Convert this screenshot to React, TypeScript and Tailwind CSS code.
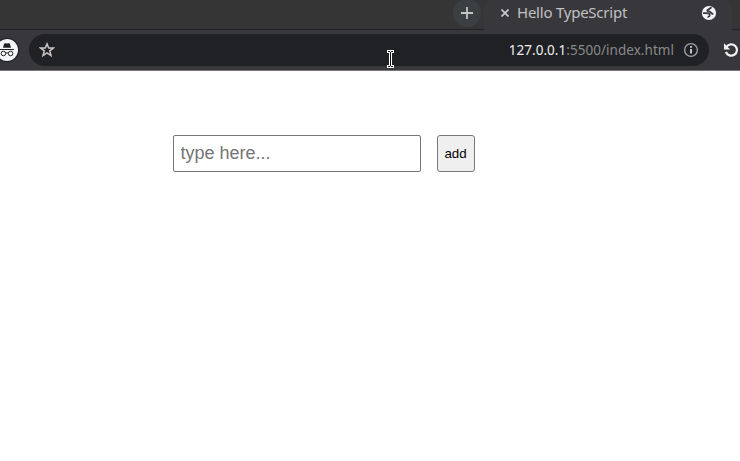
import React from 'react';

function Globe() {
  return (
    <svg width="16" height="16" viewBox="0 0 16 16" className="block">
      <circle cx="8" cy="8" r="7.1" fill="#f4f5f7" />
      <path d="M10.2 2.2C9.8 4.4 6.4 3.8 6.3 5.4C6.3 7 9.8 6 10.2 8.1C10.4 8.9 11.4 8.8 12.4 8.7" fill="none" stroke="#38373c" strokeWidth="1.9" />
      <path d="M2 8.2H5.4C7.8 8.2 9.2 9 8.7 10.6C8.3 11.7 7.2 11.2 6.8 12.6" fill="none" stroke="#38373c" strokeWidth="1.7" />
    </svg>
  );
}

function Incognito() {
  return (
    <svg width="26" height="26" viewBox="0 0 26 26" className="block shrink-0">
      <circle cx="13" cy="13" r="12.2" fill="#202125" />
      <circle cx="13" cy="13" r="11" fill="#f3f5f8" />
      <path d="M9 10.7L10.1 6.8Q10.4 6 11.2 6.2L13 6.6L14.8 6.2Q15.6 6 15.9 6.8L17 10.7Z" fill="#202125" />
      <path d="M6 12.5H20" stroke="#202125" strokeWidth="1" />
      <g fill="none" stroke="#202125" strokeWidth="1">
        <circle cx="9.4" cy="16.5" r="2.3" />
        <circle cx="16.6" cy="16.5" r="2.3" />
        <path d="M11.7 16.2Q13 15.4 14.3 16.2" />
      </g>
    </svg>
  );
}

function TabStrip() {
  return (
    <div className="flex h-[30px] bg-[#353535]">
      <div className="flex w-[484px] items-start justify-end border-b border-[#202124] pr-[3px]">
        <div className="-mt-px flex size-7 items-center justify-center rounded-full bg-[#3b3f42]">
          <svg width="12" height="12" viewBox="0 0 12 12">
            <path d="M6 0V12M0 6H12" stroke="#c3c3c3" strokeWidth="1.8" />
          </svg>
        </div>
      </div>
      <div className="flex w-[248px] items-start rounded-t-lg bg-[#38373c] pl-[17px]">
        <svg width="8" height="8" viewBox="0 0 8 8" className="mt-[9px]">
          <path d="M0.5 0.5L7.5 7.5M7.5 0.5L0.5 7.5" stroke="#c9c9cb" strokeWidth="1.7" />
        </svg>
        <span className="ml-2 mt-[2px] w-[184px] font-['Noto_Sans',sans-serif] text-[15px] leading-5 tracking-[-0.23px] text-[#c1c1c3]">Hello TypeScript</span>
        <div className="mt-[5px]"><Globe /></div>
      </div>
      <div className="flex-1 border-b border-[#202124]" />
    </div>
  );
}

function Toolbar() {
  return (
    <div className="flex h-[41px] items-start overflow-hidden border-b border-[#77747b] bg-[#38373c] pt-1">
      <div className="-ml-[6px] mt-[3px]"><Incognito /></div>
      <div className="ml-[9px] flex h-8 w-[680px] items-center rounded-full bg-[#202125] pl-[10px] pr-[10px]">
        <svg width="16" height="16" viewBox="0 0 16 16" className="shrink-0">
          <path d="M8 1.9L9.7 6H14.3L10.7 8.8L12 13.5L8 10.8L4 13.5L5.3 8.8L1.7 6H6.3Z" fill="none" stroke="#c8c6c5" strokeWidth="1.5" />
        </svg>
        <div className="-mt-px ml-auto whitespace-nowrap font-['Noto_Sans',sans-serif] text-[13.5px] leading-5 tracking-[0.04px] text-[#88898b]">
          <span className="text-[#f0f0f1]">127.0.0.1</span>:5500/index.html
        </div>
        <svg width="16" height="16" viewBox="0 0 16 16" className="ml-[9px] shrink-0">
          <circle cx="8" cy="8" r="6.4" fill="none" stroke="#9b9ea2" strokeWidth="1.4" />
          <path d="M8 7V11.5M8 4V5.8" stroke="#c2c5c8" strokeWidth="2" />
        </svg>
      </div>
      <svg width="16" height="16" viewBox="0 0 16 16" className="ml-[14px] mt-2 shrink-0">
        <path d="M3.5 4.8A5.7 5.7 0 1 1 2.9 10" fill="none" stroke="#f2f2f2" strokeWidth="2.2" />
        <path d="M1 1.3V7.6H7.2Z" fill="#f2f2f2" />
      </svg>
    </div>
  );
}

export default function App() {
  return (
    <div className="relative h-[461px] w-[740px] overflow-hidden bg-white">
      <TabStrip />
      <Toolbar />
      <main className="flex gap-4 pl-[173px] pt-16 font-['Liberation_Sans',Arial,sans-serif]">
        <input
          type="text"
          placeholder="type here..."
          className="h-[37px] w-[248px] rounded-[2px] border border-[#767676] bg-white px-[6.5px] text-[18px] outline-none placeholder:text-[#757575]"
        />
        <button className="h-[37px] w-[38px] rounded-[3px] border border-[#767676] bg-[#efefef] pr-px text-[13.333px] text-black">add</button>
      </main>
      <svg width="7" height="18" viewBox="0 0 7 18" shapeRendering="crispEdges" className="pointer-events-none absolute left-[387px] top-[50px]">
        <path d="M0 0H7V3H5V15H7V18H0V15H2V3H0Z" fill="#fff" />
        <path d="M1 1H3V2H1ZM4 1H6V2H4ZM3 2H4V16H3ZM1 16H3V17H1ZM4 16H6V17H4Z" fill="#111" />
      </svg>
    </div>
  );
}
